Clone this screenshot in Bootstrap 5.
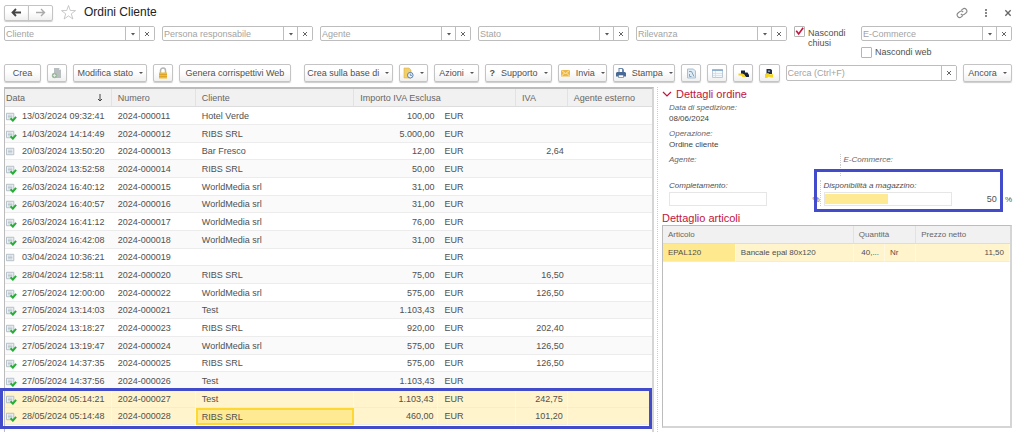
<!DOCTYPE html>
<html lang="it">
<head>
<meta charset="utf-8">
<meta name="viewport" content="width=device-width, initial-scale=1">
<title>Ordini Cliente</title>
<link href="https://cdn.jsdelivr.net/npm/bootstrap@5.3.0/dist/css/bootstrap.min.css" rel="stylesheet">
<style>
  body { font-family: "Liberation Sans", Arial, sans-serif; font-size: 9px; line-height: 12px; color: #505050; background: #fff; }
  .page { min-height: 100vh; padding: 4px 12px 0 4px; }
  .page-title { font-size: 12px; line-height: 17px; color: #222; margin: 0; }
  .ui-btn { --bs-btn-font-size: 9px; --bs-btn-line-height: 12px; --bs-btn-padding-x: 0; --bs-btn-padding-y: 0; --bs-btn-border-radius: 2px;
    --bs-btn-color: #505050; --bs-btn-border-color: #c4c4c4; --bs-btn-hover-border-color: #999;
    height: 18px; display: flex; align-items: center; justify-content: center; gap: 6px; white-space: nowrap;
    background: linear-gradient(#fff 40%, #f0f0f0); box-shadow: 0 1px 1px #ccc; }
  .drop::after { content: ""; border: 2px solid transparent; border-top-color: #555; border-bottom: 0; }
  .nav-pair .ui-btn { width: 25px; height: 16px; }
  .bare { border: 0; background: none; padding: 0; line-height: 0; }
  .filters { display: grid; grid-template-columns: repeat(5, minmax(0, 151fr)) minmax(0, 60fr) minmax(0, 151fr); column-gap: 7px; margin-top: 5px; height: 37px; align-items: start; }
  .combo { height: 15px; flex-wrap: nowrap; border: 1px solid #bdbdbd; border-radius: 2px; overflow: hidden; }
  .input-group.combo > .form-control { position: static; font-size: 9px; line-height: 12px; padding: 0 1px; min-height: 0; border: 0; color: #505050; }
  .combo .form-control::placeholder { color: #a3a3a3; opacity: 1; }
  .input-group.combo > button { width: 15px; flex: none; border: 0; border-left: 1px solid #bdbdbd; background: #fff; padding: 0; display: flex; align-items: center; justify-content: center; }
  .tick { min-height: 0; margin: 0; padding: 0; display: flex; gap: 3px; line-height: 10px; }
  .tick .form-check-input { float: none; flex: none; width: 11px; height: 11px; margin: 0; border: 1px solid #b5b5b5; border-radius: 1px; }
  .tick .form-check-input:checked { background-color: #fff; background-size: 100%;
    background-image: url("data:image/svg+xml,%3Csvg xmlns='http://www.w3.org/2000/svg' viewBox='0 0 11 11'%3E%3Cpath d='M1.500 4.500l3 4L10 1' fill='none' stroke='%23c41440' stroke-width='2'/%3E%3C/svg%3E"); }
  .tick-top { padding-top: 2px; }
  .tools { display: grid; column-gap: 6px; align-items: center; height: 20px;
    grid-template-columns: 37fr 20fr 74fr 20fr 111fr 96fr 29fr 45fr 67fr 49fr 62fr 20fr 20fr 20fr 20fr 171fr 49fr; }
  .tools > * { min-width: 0; }
  .tools .wide-gap { margin-left: 7px; }
  .tools .combo { height: 16px; }
  .panes { display: grid; grid-template-columns: minmax(0, 650fr) minmax(0, 351fr); column-gap: 7px; margin-top: 4px; }
  .orders-box { border: 1px solid #bcbcbc; border-width: 2px 2px 0 1px; border-right-color: #d5d5d5; }
  .data-grid { table-layout: fixed; width: 100%; border-collapse: separate; border-spacing: 0; }
  .data-grid th { font-weight: 400; color: #666; background: #f1f1f1; border-bottom: 1px solid #ddd; border-right: 1px solid #e2e2e2; padding: 0 5px; white-space: nowrap; }
  .data-grid th:last-child { border-right: 0; }
  .data-grid td { padding: 0 5px; white-space: nowrap; overflow: hidden; border-bottom: 1px solid #ececec; line-height: 12px; }
  .data-grid .num { text-align: right; }
  .orders th, .orders td { padding: 0 4px 0 6px; }
  .orders tr { height: 18px; }
  .orders tbody tr:nth-child(3n) { height: 17px; }
  .orders tbody tr:nth-child(even) { background: #fafafa; }
  .orders th:first-child, .orders td:first-child { padding-left: 1px; }
  .orders .doc { margin-right: 5px; vertical-align: -3px; }
  .orders .picked td, .items .picked td { background: #fff4cb; border-right: 1px solid #fff9e4; }
  .orders .picked td.current { background: #ffea94; border: 2px solid #fdd835; padding: 0 3px 0 4px; }
  .items .picked td.current { background: #ffe98f; }
  .marker { position: absolute; border: 3px solid #424bc9; pointer-events: none; }
  .marker-rows { left: -5px; right: 0; bottom: 3px; height: 41px; }
  .marker-field { inset: -11px 9px -6px -7px; }
  .side { border-left: 1px dotted #ccc; margin-left: -4px; padding-left: 4px; }
  .side h2 { font-size: 11px; line-height: 14px; color: #c0143c; margin: 0; }
  .small-set { font-size: 8px; line-height: 11px; padding: 1px 0 0 7px; }
  .small-set dt { font-weight: 400; font-style: italic; color: #666; }
  .small-set dd { margin: 0 0 4px; color: #444; }
  .halves dd { margin: 0; }
  .meter { height: 14px; border: 1px solid #e6e6e6; border-radius: 0; background: #fff; }
  .meter .progress-bar { background: #ffea94; margin: 1px 0; }
  .meter-line { margin-top: 1px; }
  .meter-value { font-size: 9px; }
  .halves { display: grid; grid-template-columns: minmax(0, 171fr) minmax(0, 173fr); }
  .split { border-left: 1px dotted #ccc; padding-left: 3px; }
  .gauges { display: grid; grid-template-columns: minmax(0, 151fr) minmax(0, 193fr); margin: 4px 0 5px; }
  .items-box { border: 1px solid #bcbcbc; border-right: 2px solid #d5d5d5; border-bottom: 2px solid #d5d5d5; height: 203px; }
  .items { font-size: 8px; }
  .items tr { height: 18px; }
</style>
</head>
<body>
<svg width="0" height="0" class="position-absolute" aria-hidden="true">
  <symbol id="doc" viewBox="0 0 12 12"><path d="M.5 2.500h8v7h-8z" fill="#f3f6f8" stroke="#aebac3"/><path d="M2 4.500h5M2 6h5M2 7.500h5" stroke="#a9b7c1" stroke-width=".8"/></symbol>
  <symbol id="doc-ok" viewBox="0 0 12 12"><use href="#doc"/><path d="M5 8l2.500 2.500L11 6.500" fill="none" stroke="#25ad35" stroke-width="2.200"/></symbol>
  <symbol id="x" viewBox="0 0 6 6"><path d="M1 1l4 4M5 1L1 5" stroke="#666" fill="none"/></symbol>
  <symbol id="down" viewBox="0 0 6 6"><path d="M1 2h4L3 4.500z" fill="#555"/></symbol>
</svg>
<div class="page d-flex flex-column">
  <header class="d-flex align-items-center">
    <div class="btn-group nav-pair">
      <button class="btn ui-btn" type="button" aria-label="Indietro"><svg width="11" height="9" viewBox="0 0 11 9"><path d="M10 4.500H2M5 1L1.500 4.500 5 8" fill="none" stroke="#444" stroke-width="1.800"/></svg></button>
      <button class="btn ui-btn" type="button" aria-label="Avanti"><svg width="11" height="9" viewBox="0 0 11 9"><path d="M1 4.500h8M6 1l3.500 3.500L6 8" fill="none" stroke="#aaa" stroke-width="1.400"/></svg></button>
    </div>
    <button class="bare ms-2" type="button" aria-label="Preferiti"><svg width="15" height="15" viewBox="0 0 15 15"><path d="M7.500 .5l1.800 5 5.200.1-4.200 3.200 1.600 5.200-4.400-3.100-4.400 3.100 1.600-5.200L.5 5.600l5.200-.1z" fill="#fff" stroke="#bbb" stroke-width=".8"/></svg></button>
    <h1 class="page-title ps-2">Ordini Cliente</h1>
    <div class="ms-auto d-flex align-items-center gap-3">
      <button class="bare" type="button" aria-label="Copia collegamento"><svg width="12" height="12" viewBox="0 0 12 12"><g transform="rotate(-40 6 6)" fill="none" stroke="#888" stroke-width="1.100"><path d="M5 8.500H3a2.500 2.500 0 010-5h2.500a2.500 2.500 0 012 2.500M7 3.500h2a2.500 2.500 0 010 5H6.500A2.500 2.500 0 014.500 6"/></g></svg></button>
      <button class="bare" type="button" aria-label="Menu"><svg width="4" height="10" viewBox="0 0 4 10"><path d="M1 1h2v2H1zM1 4h2v2H1zM1 7h2v2H1z" fill="#888"/></svg></button>
      <button class="bare" type="button" aria-label="Chiudi"><svg width="8" height="8"><use href="#x"/></svg></button>
    </div>
  </header>

  <section class="filters" id="filters">
    <div class="tick form-check"><input class="form-check-input" type="checkbox" id="closed" checked><label class="tick-top" for="closed">Nascondi chiusi</label></div>
    <div id="lastFilter">
      <div class="tick form-check mt-1 tick-top"><input class="form-check-input" type="checkbox" id="web"><label for="web">Nascondi web</label></div>
    </div>
  </section>

  <section class="tools">
    <button class="btn ui-btn" type="button">Crea</button>
    <button class="btn ui-btn" type="button" aria-label="Copia"><svg width="12" height="12" viewBox="0 0 12 12"><path d="M3 1h5l2 2v8H3z" fill="#b9bfc1"/><path d="M8 1v2h2" fill="#e6e8e9"/><circle cx="3.500" cy="8.500" r="2.700" fill="#9fb9a2"/><path d="M2 8.500h3M3.500 7v3" stroke="#e6eee6" stroke-width=".8"/></svg></button>
    <button class="btn ui-btn drop" type="button">Modifica stato</button>
    <button class="btn ui-btn" type="button" aria-label="Blocca"><svg width="12" height="12" viewBox="0 0 12 12"><path d="M3.500 6V3.500a2.500 2.500 0 015 0V6" fill="none" stroke="#b5b5b5" stroke-width="1.500"/><path d="M2 5.500h8v6H2z" fill="#eebc35"/><path d="M2 7.500h8M2 9.500h8" stroke="#d99c20" stroke-width=".7"/></svg></button>
    <button class="btn ui-btn" type="button">Genera corrispettivi Web</button>
    <button class="btn ui-btn drop wide-gap" type="button">Crea sulla base di</button>
    <button class="btn ui-btn drop" type="button" aria-label="Promemoria"><svg width="11" height="12" viewBox="0 0 11 12"><path d="M1 1h5l2 2v8H1z" fill="#f2cf69" stroke="#d9b34b" stroke-width=".6"/><circle cx="7.300" cy="8.200" r="2.800" fill="#edf3fa" stroke="#5a80b5"/><path d="M7.300 6.500v1.900H9" fill="none" stroke="#486b9d" stroke-width=".7"/></svg></button>
    <button class="btn ui-btn drop" type="button">Azioni</button>
    <button class="btn ui-btn drop" type="button"><b>?</b>Supporto</button>
    <button class="btn ui-btn drop" type="button"><svg width="9" height="8" viewBox="0 0 9 8"><path d="M0 1h9v6.500H0z" fill="#edb747"/><path d="M.5 1.500l4 3 4-3M.5 7l3-3M8.500 7l-3-3" fill="none" stroke="#fff0c4" stroke-width=".8"/></svg>Invia</button>
    <button class="btn ui-btn drop" type="button"><svg width="10" height="10" viewBox="0 0 10 10"><path d="M2.500 0h4L8 1.500V4H2.500z" fill="#6d88aa"/><path d="M3.500 1H6v3H3.500z" fill="#fff"/><path d="M1 4h8l1 1v3.500H0V5z" fill="#496a94"/><path d="M2.500 7h5v2.500h-5z" fill="#fff" stroke="#496a94" stroke-width=".6"/></svg>Stampa</button>
    <button class="btn ui-btn" type="button" aria-label="Report"><svg width="11" height="11" viewBox="0 0 11 11"><path d="M1.500 1h6l2 2v7h-8z" fill="#dfeaf3" stroke="#a9c0d2"/><path d="M3 3.500h2.500L8 8.500M3.500 6v2.500h2" fill="none" stroke="#7fa2bf"/></svg></button>
    <button class="btn ui-btn" type="button" aria-label="Elenco"><svg width="11" height="9" viewBox="0 0 11 9"><path d="M.5.5h10v8H.5z" fill="#f4f8fb" stroke="#bccbd7"/><path d="M0 1.200h11" stroke="#8fb0cc" stroke-width="1.600"/><path d="M3.500 2v6M1 4.500h9M1 6.500h9" stroke="#ccdbe6" stroke-width=".7"/></svg></button>
    <button class="btn ui-btn" type="button" aria-label="Consegna"><svg width="11" height="9" viewBox="0 0 11 9"><path d="M3 1.500h4v2h2.500L11 6v2H8L6 5.500H3z" fill="#17233c"/><path d="M.5 4.500h4L7 6v2H4.500L3.500 6.500h-3z" fill="#f5cf22"/></svg></button>
    <button class="btn ui-btn" type="button" aria-label="Magazzino"><svg width="10" height="11" viewBox="0 0 10 11"><path d="M2.500 1h4L8 2v4H2.500z" fill="#24304a"/><path d="M4 2.500h2v1.500H4z" fill="#8b9bb5"/><path d="M1 6l3-1 2 1.500 3-.5v3.500H6.500L5 8.500 3 10H1z" fill="#f7d51d"/></svg></button>
    <div class="input-group combo"><input class="form-control" type="search" placeholder="Cerca (Ctrl+F)" aria-label="Cerca"><button type="button" aria-label="Cancella"><svg width="6" height="6"><use href="#x"/></svg></button></div>
    <button class="btn ui-btn drop" type="button">Ancora</button>
  </section>

  <main class="panes flex-grow-1">
    <section class="orders-box position-relative">
      <table class="data-grid orders">
        <colgroup><col style="width:16.5%"><col style="width:13%"><col style="width:24.5%"><col style="width:13%"><col style="width:12%"><col style="width:8%"><col style="width:13%"></colgroup>
        <thead><tr><th><span class="d-flex justify-content-between pe-1">Data<svg width="6" height="12" viewBox="0 0 6 12"><path d="M3 2v7M1 7l2 2 2-2" fill="none" stroke="#444"/></svg></span></th><th>Numero</th><th>Cliente</th><th colspan="2">Importo IVA Esclusa</th><th>IVA</th><th>Agente esterno</th></tr></thead>
        <tbody id="orders"></tbody>
      </table>
      <div class="marker marker-rows"></div>
    </section>

    <aside class="side">
      <h2 class="d-flex align-items-center gap-1"><svg width="10" height="8" viewBox="0 0 10 8"><path d="M1 2l4 4 4-4" fill="none" stroke="#c0143c" stroke-width="1.200"/></svg>Dettagli ordine</h2>
      <div class="small-set">
        <dl class="m-0">
          <dt>Data di spedizione:</dt><dd>08/06/2024</dd>
          <dt>Operazione:</dt><dd>Ordine cliente</dd>
        </dl>
        <dl class="halves m-0">
          <dt>Agente:</dt><dt class="split">E-Commerce:</dt><dd>&nbsp;</dd><dd class="split">&nbsp;</dd>
        </dl>
        <div class="gauges">
          <div><i>Completamento:</i>
            <div class="meter-line d-flex align-items-center justify-content-between"><div class="progress meter" style="width:65%"></div><span>%</span></div></div>
          <div class="position-relative split"><i>Disponibilità a magazzino:</i>
            <div class="meter-line d-flex align-items-center"><div class="progress meter" style="width:68%"><div class="progress-bar" style="width:50%"></div></div><span class="meter-value ms-auto me-2">50</span><span>%</span></div>
            <div class="marker marker-field"></div></div>
        </div>
      </div>
      <h2>Dettaglio articoli</h2>
      <div class="items-box">
        <table class="data-grid items">
          <colgroup><col style="width:21%"><col style="width:34%"><col style="width:9%"><col style="width:9%"><col style="width:27%"></colgroup>
          <thead><tr><th colspan="2">Articolo</th><th colspan="2">Quantità</th><th>Prezzo netto</th></tr></thead>
          <tbody><tr class="picked"><td class="current">EPAL120</td><td>Bancale epal 80x120</td><td class="num">40,...</td><td>Nr</td><td class="num">11,50</td></tr></tbody>
        </table>
      </div>
    </aside>
  </main>
</div>
<script src="https://cdn.jsdelivr.net/npm/bootstrap@5.3.0/dist/js/bootstrap.bundle.min.js"></script>
<script>
  const combo = name => `<div class="input-group combo"><input class="form-control" type="text" placeholder="${name}" aria-label="${name}"><button type="button" aria-label="Apri"><svg width="6" height="6"><use href="#down"/></svg></button><button type="button" aria-label="Cancella"><svg width="6" height="6"><use href="#x"/></svg></button></div>`;
  document.getElementById('filters').insertAdjacentHTML('afterbegin', ['Cliente', 'Persona responsabile', 'Agente', 'Stato', 'Rilevanza'].map(combo).join(''));
  document.getElementById('lastFilter').insertAdjacentHTML('afterbegin', combo('E-Commerce'));

  // date, number, client, net amount, VAT
  const orders = [
    ['13/03/2024 09:32:41', 11, 'Hotel Verde', '100,00', ''],
    ['14/03/2024 14:14:49', 12, 'RIBS SRL', '5.000,00', ''],
    ['20/03/2024 13:50:20', 13, 'Bar Fresco', '12,00', '2,64'],
    ['20/03/2024 13:52:58', 14, 'RIBS SRL', '50,00', ''],
    ['26/03/2024 16:40:12', 15, 'WorldMedia srl', '31,00', ''],
    ['26/03/2024 16:40:57', 16, 'WorldMedia srl', '31,00', ''],
    ['26/03/2024 16:41:12', 17, 'WorldMedia srl', '76,00', ''],
    ['26/03/2024 16:42:08', 18, 'WorldMedia srl', '31,00', ''],
    ['03/04/2024 10:36:21', 19, '', '', ''],
    ['28/04/2024 12:58:11', 20, 'RIBS SRL', '75,00', '16,50'],
    ['27/05/2024 12:00:00', 22, 'WorldMedia srl', '575,00', '126,50'],
    ['27/05/2024 13:14:03', 21, 'Test', '1.103,43', ''],
    ['27/05/2024 13:18:27', 23, 'RIBS SRL', '920,00', '202,40'],
    ['27/05/2024 13:19:47', 24, 'WorldMedia srl', '575,00', '126,50'],
    ['27/05/2024 14:37:35', 25, 'RIBS SRL', '575,00', '126,50'],
    ['27/05/2024 14:37:56', 26, 'Test', '1.103,43', ''],
    ['28/05/2024 05:14:21', 27, 'Test', '1.103,43', '242,75'],
    ['28/05/2024 05:14:48', 28, 'RIBS SRL', '460,00', '101,20']
  ];
  const drafts = [13, 19];
  document.getElementById('orders').innerHTML = orders.map(([date, no, client, net, vat]) =>
    `<tr class="${no > 26 ? 'picked' : ''}"><td><svg class="doc" width="11" height="11"><use href="#${drafts.includes(no) ? 'doc' : 'doc-ok'}"/></svg>${date}</td><td>2024-0000${no}</td><td class="${no === 28 ? 'current' : ''}">${client}</td><td class="num">${net}</td><td>EUR</td><td class="num">${vat}</td><td></td></tr>`).join('');
</script>
</body>
</html>
